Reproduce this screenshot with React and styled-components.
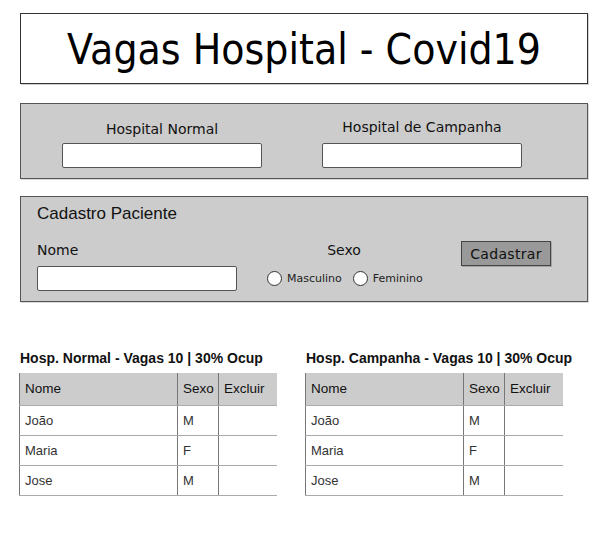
import React from 'react';
import styled, { createGlobalStyle } from 'styled-components';

const SKETCH = `"DejaVu Sans", sans-serif`;
const ARIAL = `"Liberation Sans", Arial, sans-serif`;

const GlobalStyle = createGlobalStyle`
  html, body { margin: 0; padding: 0; background: #fff; }
  body { font-family: ${ARIAL}; }
  *, *::before, *::after { box-sizing: border-box; }
`;

const Page = styled.div`
  width: 608px;
  height: 545px;
  padding: 13px 20px 0 20px;
  display: flex;
  flex-direction: column;
`;

const TitleBox = styled.header`
  height: 71px;
  border: 1px solid #333;
  background: #fff;
  display: flex;
  align-items: center;
  justify-content: center;
  box-shadow: 1px 1px 0 rgba(0, 0, 0, 0.18);
`;

const Title = styled.h1`
  margin: 0;
  font-family: ${SKETCH};
  font-weight: normal;
  font-size: 38px;
  line-height: 1;
  color: #000;
  transform: scaleY(1.12);
`;

const Panel = styled.section`
  background: #cccccc;
  border: 1px solid #555;
  box-shadow: 1px 1px 0 rgba(0, 0, 0, 0.15);
`;

const HospitalPanel = styled(Panel)`
  margin-top: 19px;
  height: 76px;
  padding: 15px 0 0 41px;
  display: grid;
  grid-template-columns: 200px 200px;
  column-gap: 60px;
  align-items: end;
  align-content: start;
`;

const Field = styled.div`
  display: flex;
  flex-direction: column;
  width: ${p => p.$width || 200}px;
  margin-left: ${p => p.$offset || 0}px;
  padding-top: ${p => p.$top || 0}px;
`;

const SketchLabel = styled.label`
  font-family: ${SKETCH};
  font-size: 14px;
  line-height: 17px;
  color: #111;
  text-align: ${p => (p.$left ? 'left' : 'center')};
  margin-bottom: ${p => p.$gap || 5}px;
`;

const TextInput = styled.div`
  height: 25px;
  width: 200px;
  background: #fff;
  border: 1px solid #555;
  border-radius: 2px;
`;

const PatientPanel = styled(Panel)`
  margin-top: 17px;
  height: 106px;
  padding: 8px 0 0 16px;
`;

const PanelHeading = styled.h2`
  margin: 0;
  font-family: ${ARIAL};
  font-weight: normal;
  font-size: 17px;
  line-height: 18px;
  color: #111;
`;

const FormRow = styled.div`
  margin-top: 18px;
  display: flex;
  align-items: flex-start;
`;

const RadioRow = styled.div`
  height: 25px;
  display: flex;
  align-items: center;
  gap: 11px;
`;

const RadioOption = styled.span`
  display: inline-flex;
  align-items: center;
  gap: 5px;
  font-family: ${SKETCH};
  font-size: 11px;
  color: #222;
`;

const RadioCircle = styled.span`
  width: 15px;
  height: 15px;
  border-radius: 50%;
  background: #fff;
  border: 1px solid #333;
`;

const Button = styled.button`
  margin-left: 40px;
  width: 90px;
  height: 25px;
  padding: 0;
  background: #999;
  border: 1px solid #444;
  font-family: ${SKETCH};
  font-size: 14px;
  letter-spacing: 0.3px;
  color: #111;
  box-shadow: 1px 1px 0 rgba(0, 0, 0, 0.2);
`;

const TablesRow = styled.div`
  margin-top: 48px;
  margin-left: -1px;
  display: flex;
  gap: 29px;
`;

const TableBlock = styled.div`
  display: flex;
  flex-direction: column;
  width: 257px;
`;

const TableTitle = styled.h3`
  margin: 0 0 7px 1px;
  font-family: ${ARIAL};
  font-weight: bold;
  font-size: 14px;
  line-height: 16px;
  color: #111;
  white-space: nowrap;
`;

const Table = styled.table`
  width: 257px;
  border-collapse: collapse;
  table-layout: fixed;
  font-family: ${ARIAL};
  font-size: 13px;
`;

const HeadCell = styled.th`
  height: 32px;
  padding: 0 5px;
  background: #cccccc;
  text-align: left;
  font-weight: normal;
  font-size: 13.5px;
  color: #111;
  border-left: 1px solid #777;
  border-bottom: 1px solid #aaa;
  white-space: nowrap;
`;

const Cell = styled.td`
  height: 30px;
  padding: 0 5px;
  color: #333;
  border-left: 1px solid #777;
  border-bottom: 1px solid #aaa;
`;

const patients = [
  { nome: 'João', sexo: 'M' },
  { nome: 'Maria', sexo: 'F' },
  { nome: 'Jose', sexo: 'M' },
];

function PatientTable({ title }) {
  return (
    <TableBlock>
      <TableTitle>{title}</TableTitle>
      <Table>
        <colgroup>
          <col style={{ width: 158 }} />
          <col style={{ width: 41 }} />
          <col style={{ width: 58 }} />
        </colgroup>
        <thead>
          <tr>
            <HeadCell>Nome</HeadCell>
            <HeadCell>Sexo</HeadCell>
            <HeadCell>Excluir</HeadCell>
          </tr>
        </thead>
        <tbody>
          {patients.map(p => (
            <tr key={p.nome}>
              <Cell>{p.nome}</Cell>
              <Cell>{p.sexo}</Cell>
              <Cell />
            </tr>
          ))}
        </tbody>
      </Table>
    </TableBlock>
  );
}

export default function App() {
  return (
    <>
      <GlobalStyle />
      <Page>
        <TitleBox>
          <Title>Vagas Hospital - Covid19</Title>
        </TitleBox>

        <HospitalPanel>
          <Field>
            <SketchLabel $gap={5}>Hospital Normal</SketchLabel>
            <TextInput />
          </Field>
          <Field>
            <SketchLabel $gap={7}>Hospital de Campanha</SketchLabel>
            <TextInput />
          </Field>
        </HospitalPanel>

        <PatientPanel>
          <PanelHeading>Cadastro Paciente</PanelHeading>
          <FormRow>
            <Field $top={1}>
              <SketchLabel $left $gap={7}>Nome</SketchLabel>
              <TextInput />
            </Field>
            <Field $top={1} $width={154} $offset={30}>
              <SketchLabel $gap={7}>Sexo</SketchLabel>
              <RadioRow>
                <RadioOption>
                  <RadioCircle />
                  Masculino
                </RadioOption>
                <RadioOption>
                  <RadioCircle />
                  Feminino
                </RadioOption>
              </RadioRow>
            </Field>
            <Button>Cadastrar</Button>
          </FormRow>
        </PatientPanel>

        <TablesRow>
          <PatientTable title="Hosp. Normal - Vagas 10 | 30% Ocup" />
          <PatientTable title="Hosp. Campanha - Vagas 10 | 30% Ocup" />
        </TablesRow>
      </Page>
    </>
  );
}
